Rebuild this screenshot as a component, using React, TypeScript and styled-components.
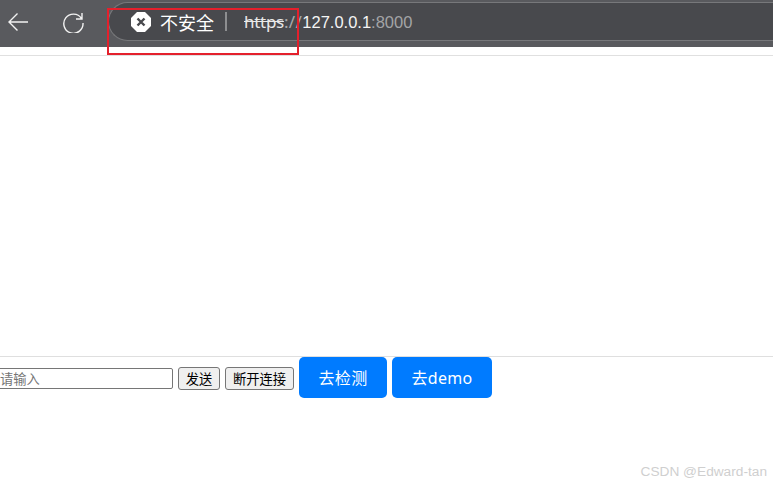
import React from "react";
import styled, { createGlobalStyle } from "styled-components";

const Global = createGlobalStyle`
  html, body { margin: 0; padding: 0; background: #fff; overflow: hidden; }
  #root { width: 773px; height: 485px; }
`;
const Page = styled.div`
  position: relative; width: 773px; height: 485px; display: flex; flex-direction: column; overflow: hidden;
  font-family: "Liberation Sans", "Noto Sans CJK SC", sans-serif;
`;
const Toolbar = styled.div`
  height: 47px; background: #595a5e; display: flex; padding-left: 7px; box-sizing: border-box; align-items: flex-start; flex: none;
`;
const NavIcon = styled.svg`
  width: 22px; height: 22px; margin-top: 11px; flex: none; fill: none; stroke: #f2f2f2; stroke-width: 1.4;
`;
const Reload = styled(NavIcon)`margin-left: 33px;`;
const Omnibox = styled.div`
  margin: 2px 0 0 24px; flex: 1; height: 39px; box-sizing: border-box; background: #48494d;
  border: 1px solid #77787b; border-right: 0; border-radius: 20px 0 0 20px;
  display: flex; align-items: center; padding-left: 22px; color: #fff; font-size: 18px;
`;
const Insecure = styled.span`margin-left: 9px; font-size: 18px;`;
const Sep = styled.span`width: 2px; height: 19px; background: #8d8e90; margin: 0 17px 0 11px;`;
const Url = styled.span`display: flex; align-items: baseline; font-size: 16.5px; font-family: "Liberation Sans", sans-serif;`;
const Scheme = styled.span`font-family: "Noto Sans", sans-serif; font-size: 17px; text-decoration: line-through; color: #e8e8e8; letter-spacing: -0.3px;`;
const Slash = styled.span`font-family: "Noto Sans", sans-serif; font-size: 17px; color: #a9aaac; letter-spacing: 0.4px;`;
const Host = styled.span`color: #f4f4f4;`;
const Port = styled.span`color: #a3a4a6;`;
const HighlightBox = styled.div`
  position: absolute; left: 107px; top: 8px; width: 192px; height: 47px; box-sizing: border-box; border: 2px solid #e4202c;
`;
const TopGap = styled.div`height: 8px; flex: none;`;
const Content = styled.div`
  height: 300px; flex: none; border-top: 1px solid #e0e0e0;
`;
const Controls = styled.div`
  border-top: 1px solid #dfdfdf; display: flex; align-items: center; height: 41px; margin-left: -9px; flex: none;
`;
const Field = styled.input`
  width: 182px; height: 21px; box-sizing: border-box; border: 1px solid #767676; border-radius: 2px;
  padding: 3px 2px 1px 8px; font-size: 13.3px; font-family: "Liberation Sans", "Noto Sans CJK SC", sans-serif;
  margin: 2px 5px 0 0; background: #fff;
  &::placeholder { color: #757575; }
`;
const NativeButton = styled.button<{ $w: number }>`
  width: ${(p) => p.$w}px; height: 23px; box-sizing: border-box; border: 1px solid #767676; border-radius: 3px; background: #efefef; color: #000;
  font-size: 13.3px; font-family: "Liberation Sans", "Noto Sans CJK SC", sans-serif; padding: 0; margin: 1px 5px 0 0;
`;
const PrimaryButton = styled.button<{ $w: number }>`
  width: ${(p) => p.$w}px; height: 41px; box-sizing: border-box; border: 0; border-radius: 5px; background: #007bff; color: #fff;
  font-size: 16px; font-family: "Noto Sans", "Noto Sans CJK SC", sans-serif; letter-spacing: 0.3px; padding: 0 0 2px; margin-right: 5px;
`;
const Watermark = styled.div`
  position: absolute; right: 6px; top: 464px; font-size: 13.7px; color: #cfcfcf; font-family: "Liberation Sans", sans-serif;
`;

export default function App() {
  return (
    <Page>
      <Global />
      <Toolbar>
        <NavIcon viewBox="0 0 22 22"><path d="M21 11H2M10.5 2.5 2 11l8.5 8.5" /></NavIcon>
        <Reload viewBox="0 0 22 22"><path d="M19.5 7.5A9.6 9.6 0 1 0 21 12M20 2v6h-6" /></Reload>
        <Omnibox>
          <svg width="20" height="20" viewBox="0 0 20 20">
            <path fill="#fff" d="M6 0h8l6 6v8l-6 6H6l-6-6V6z" />
            <path stroke="#48494d" strokeWidth="2.4" d="m6.5 6.5 7 7m0-7-7 7" />
          </svg>
          <Insecure>不安全</Insecure>
          <Sep />
          <Url>
            <Scheme>https</Scheme>
            <Slash>://</Slash>
            <Host>127.0.0.1</Host>
            <Port>:8000</Port>
          </Url>
        </Omnibox>
      </Toolbar>
      <TopGap />
      <Content />
      <Controls>
        <Field placeholder="请输入" />
        <NativeButton $w={42}>发送</NativeButton>
        <NativeButton $w={69}>断开连接</NativeButton>
        <PrimaryButton $w={88}>去检测</PrimaryButton>
        <PrimaryButton $w={100}>去demo</PrimaryButton>
      </Controls>
      <Watermark>CSDN @Edward-tan</Watermark>
      <HighlightBox />
    </Page>
  );
}
